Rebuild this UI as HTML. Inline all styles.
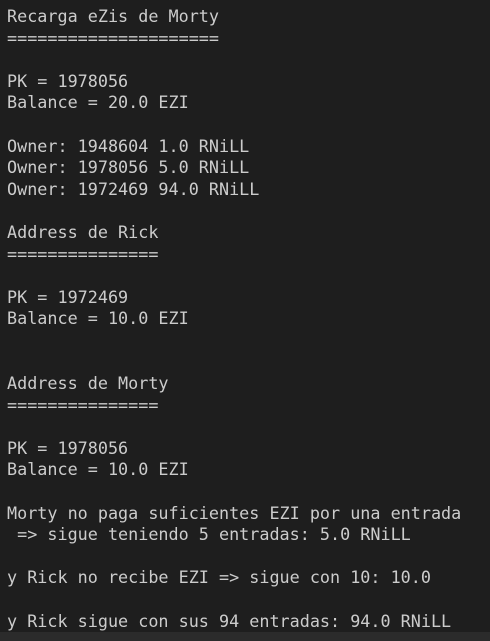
<!DOCTYPE html>
<html><head><meta charset="utf-8"><style>
html,body{margin:0;padding:0;}
body{width:490px;height:641px;background:#1e1e1e;overflow:hidden;position:relative;}
pre{margin:0;position:absolute;left:7px;top:6px;font-family:"DejaVu Sans Mono","Liberation Mono",monospace;font-size:16.78px;line-height:21.6px;color:#cccccc;}
.bar{position:absolute;left:0;top:632px;width:490px;height:9px;background:#2b2b2b;}
</style></head><body>
<pre>Recarga eZis de Morty
=====================

PK = 1978056
Balance = 20.0 EZI

Owner: 1948604 1.0 RNiLL
Owner: 1978056 5.0 RNiLL
Owner: 1972469 94.0 RNiLL

Address de Rick
===============

PK = 1972469
Balance = 10.0 EZI


Address de Morty
===============

PK = 1978056
Balance = 10.0 EZI

Morty no paga suficientes EZI por una entrada
 =&gt; sigue teniendo 5 entradas: 5.0 RNiLL

y Rick no recibe EZI =&gt; sigue con 10: 10.0

y Rick sigue con sus 94 entradas: 94.0 RNiLL</pre>
<div class="bar"></div>
</body></html>
